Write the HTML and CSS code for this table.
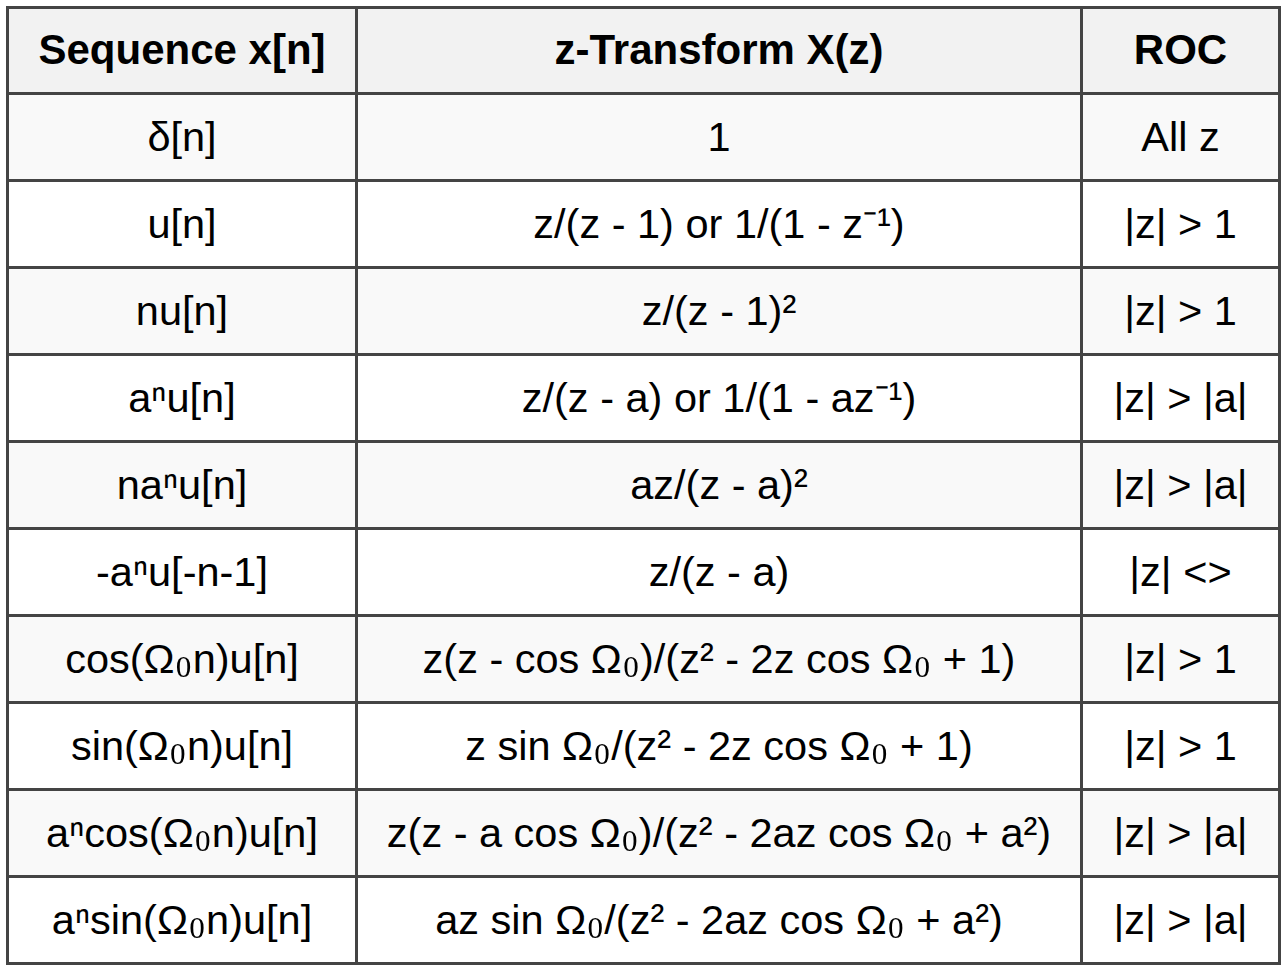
FILE: index.html
```html
<!DOCTYPE html>
<html>
<head>
<meta charset="utf-8">
<link rel="stylesheet" href="styles.css">
</head>
<body>
<div class="wrap">
<table class="zt">
  <colgroup>
    <col class="c1"><col class="c2"><col class="c3">
  </colgroup>
  <thead>
    <tr><th>Sequence x[n]</th><th>z-Transform X(z)</th><th>ROC</th></tr>
  </thead>
  <tbody>
    <tr><td>δ[n]</td><td>1</td><td>All z</td></tr>
    <tr><td>u[n]</td><td>z/(z - 1) or 1/(1 - z⁻¹)</td><td>|z| &gt; 1</td></tr>
    <tr><td>nu[n]</td><td>z/(z - 1)²</td><td>|z| &gt; 1</td></tr>
    <tr><td>aⁿu[n]</td><td>z/(z - a) or 1/(1 - az⁻¹)</td><td>|z| &gt; |a|</td></tr>
    <tr><td>naⁿu[n]</td><td>az/(z - a)²</td><td>|z| &gt; |a|</td></tr>
    <tr><td>-aⁿu[-n-1]</td><td>z/(z - a)</td><td>|z| &lt;&gt;</td></tr>
    <tr><td>cos(Ω<span class="sub">₀</span>n)u[n]</td><td>z(z - cos Ω<span class="sub">₀</span>)/(z² - 2z cos Ω<span class="sub">₀</span> + 1)</td><td>|z| &gt; 1</td></tr>
    <tr><td>sin(Ω<span class="sub">₀</span>n)u[n]</td><td>z sin Ω<span class="sub">₀</span>/(z² - 2z cos Ω<span class="sub">₀</span> + 1)</td><td>|z| &gt; 1</td></tr>
    <tr><td>aⁿcos(Ω<span class="sub">₀</span>n)u[n]</td><td>z(z - a cos Ω<span class="sub">₀</span>)/(z² - 2az cos Ω<span class="sub">₀</span> + a²)</td><td>|z| &gt; |a|</td></tr>
    <tr><td>aⁿsin(Ω<span class="sub">₀</span>n)u[n]</td><td>az sin Ω<span class="sub">₀</span>/(z² - 2az cos Ω<span class="sub">₀</span> + a²)</td><td>|z| &gt; |a|</td></tr>
  </tbody>
</table>
</div>
</body>
</html>
```

FILE: styles.css
```css
html, body {
  margin: 0;
  padding: 0;
  background: #ffffff;
}
.wrap {
  padding: 6px;
}
.zt {
  border-collapse: separate;
  border-spacing: 0;
  table-layout: fixed;
  width: 1275px;
  border-top: 3px solid #444444;
  border-left: 3px solid #444444;
  font-family: "Liberation Sans", Arial, sans-serif;
  font-size: 41.5px;
  color: #000000;
}
.c1 { width: 349px; }
.c2 { width: 725px; }
.c3 { width: 198px; }
.zt th, .zt td {
  border-right: 3px solid #444444;
  border-bottom: 3px solid #444444;
  text-align: center;
  vertical-align: middle;
  padding: 0 2px;
  height: 84px;
  box-sizing: content-box;
  white-space: nowrap;
  line-height: 1.15;
}
.zt th {
  height: 83px;
  background: #f2f2f2;
  font-weight: bold;
  font-size: 42px;
}
.zt tbody tr:nth-child(odd) td {
  background: #f9f9f9;
}
.sub {
  font-family: "Liberation Serif", "DejaVu Serif", serif;
  font-size: 1.25em;
  line-height: 0;
  vertical-align: 0.12em;
}
```
